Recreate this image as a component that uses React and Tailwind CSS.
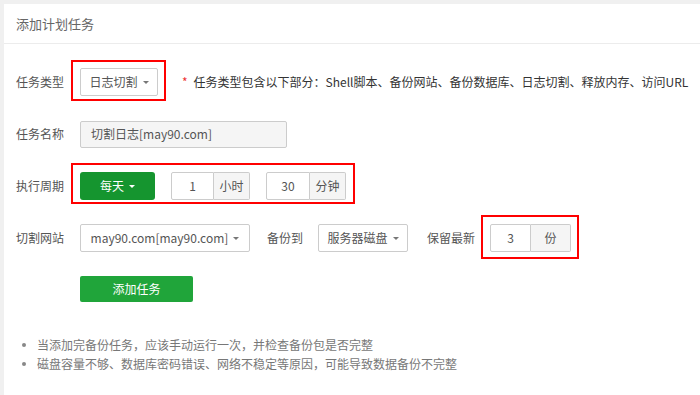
const FONT = { fontFamily: '"Microsoft YaHei", "Noto Sans CJK SC", "Noto Sans", sans-serif' }

function Caret({ className = '' }) {
  return (
    <span
      className={`ml-[5px] inline-block h-0 w-0 border-x-[3px] border-t-[3px] border-x-transparent border-t-current ${className}`}
    />
  )
}

function RedBox({ className }) {
  return <span className={`pointer-events-none absolute border-2 border-[#f00] ${className}`} />
}

function Label({ children }) {
  return <span className="w-[64px] shrink-0 text-[12px] text-[#555]">{children}</span>
}

function InputGroup({ value, addon, inputW, addonW }) {
  return (
    <div className="flex h-[28px]">
      <div
        className={`flex items-center justify-center rounded-l-[2px] border border-[#ccc] bg-white text-[12px] text-[#555] ${inputW}`}
      >
        {value}
      </div>
      <div
        className={`flex items-center justify-center rounded-r-[2px] border border-l-0 border-[#ccc] bg-[#f5f5f5] text-[12px] text-[#555] ${addonW}`}
      >
        {addon}
      </div>
    </div>
  )
}

function SelectBtn({ children, className = '' }) {
  return (
    <div
      className={`flex h-[28px] items-center justify-center rounded-[2px] border border-[#ccc] bg-white text-[12px] text-[#555] ${className}`}
    >
      {children}
      <Caret className="text-[#777]" />
    </div>
  )
}

export default function App() {
  return (
    <div className="h-[395px] w-[700px] overflow-hidden bg-[#f0f0f0] pl-[4px] pt-[4px]" style={FONT}>
      <div className="h-full bg-white">
        <div className="flex h-[40px] items-center border-b border-[#ececec] pl-[12px] text-[13px] text-[#666]">
          添加计划任务
        </div>

        <div className="flex flex-col gap-[24px] pl-[12px] pt-[24px]">
          <div className="flex h-[28px] items-center">
            <Label>任务类型</Label>
            <div className="relative">
              <SelectBtn className="w-[78px]">日志切割</SelectBtn>
              <RedBox className="-bottom-[5px] -left-[9px] -right-[8px] -top-[8px]" />
            </div>
            <span className="ml-[24px] text-[12px] text-[#333]">
              <span className="mr-[6px] text-[#e33]">*</span>
              任务类型包含以下部分：Shell脚本、备份网站、备份数据库、日志切割、释放内存、访问URL
            </span>
          </div>

          <div className="flex h-[28px] items-center">
            <Label>任务名称</Label>
            <div className="flex h-[27px] w-[207px] items-center rounded-[2px] border border-[#ccc] bg-[#f5f5f5] pl-[10px] text-[12px] text-[#555]">
              切割日志[may90.com]
            </div>
          </div>

          <div className="flex h-[28px] items-center">
            <Label>执行周期</Label>
            <div className="relative flex items-center">
              <div className="flex h-[28px] w-[75px] items-center justify-center rounded-[3px] bg-[#15952f] text-[12px] text-white">
                每天
                <Caret />
              </div>
              <div className="ml-[16px]">
                <InputGroup value="1" addon="小时" inputW="w-[43px]" addonW="w-[36px]" />
              </div>
              <div className="ml-[16px]">
                <InputGroup value="30" addon="分钟" inputW="w-[44px]" addonW="w-[36px]" />
              </div>
              <RedBox className="-bottom-[4px] -left-[9px] -right-[9px] -top-[9px]" />
            </div>
          </div>

          <div className="flex h-[28px] items-center">
            <Label>切割网站</Label>
            <SelectBtn className="w-[170px]">may90.com[may90.com]</SelectBtn>
            <span className="ml-[17px] text-[12px] text-[#555]">备份到</span>
            <SelectBtn className="ml-[15px] w-[90px]">服务器磁盘</SelectBtn>
            <span className="ml-[19px] text-[12px] text-[#555]">保留最新</span>
            <div className="relative ml-[15px]">
              <InputGroup value="3" addon="份" inputW="w-[41px]" addonW="w-[40px]" />
              <RedBox className="-bottom-[7px] -left-[9px] -right-[8px] -top-[9px]" />
            </div>
          </div>

          <div className="flex h-[26px] items-center pl-[64px]">
            <div className="flex h-[26px] w-[113px] items-center justify-center rounded-[2px] bg-[#20a53a] text-[12px] text-white">
              添加任务
            </div>
          </div>
        </div>

        <ul className="mt-[34px] flex flex-col gap-[1px] pl-[18px] text-[12px] text-[#777]">
          <li className="flex items-center">
            <span className="mr-[11px] h-[4px] w-[4px] rounded-full bg-[#888]" />
            当添加完备份任务，应该手动运行一次，并检查备份包是否完整
          </li>
          <li className="flex items-center">
            <span className="mr-[11px] h-[4px] w-[4px] rounded-full bg-[#888]" />
            磁盘容量不够、数据库密码错误、网络不稳定等原因，可能导致数据备份不完整
          </li>
        </ul>
      </div>
    </div>
  )
}
